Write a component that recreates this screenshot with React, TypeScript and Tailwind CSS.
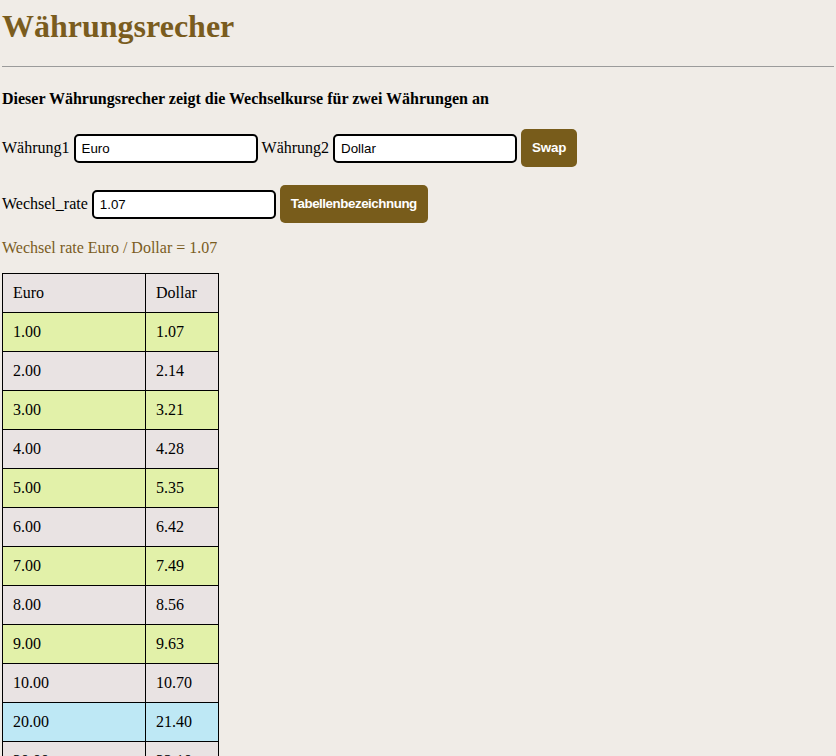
import { useState } from "react";

const serif = "font-['Liberation_Serif','Times_New_Roman',serif]";
const sans = "font-['Liberation_Sans',Arial,sans-serif]";

const amounts = [1, 2, 3, 4, 5, 6, 7, 8, 9, 10, 20, 30, 40, 50];

function rowColor(n: number) {
  if (n === 20) return "bg-[#bee8f5]";
  if (n < 10 && n % 2 === 1) return "bg-[#e2f1a9]";
  return "bg-[#e9e3e3]";
}

export default function App() {
  const [from, setFrom] = useState("Euro");
  const [to, setTo] = useState("Dollar");
  const [rate, setRate] = useState("1.07");
  const r = parseFloat(rate) || 0;

  return (
    <div className={`h-[756px] overflow-hidden bg-[#f0ece7] px-[2px] text-black ${serif}`}>
      <h1 className="mt-[8px] text-[32px] font-bold leading-[37px] text-[#7a5c1e]">
        Währungsrecher
      </h1>
      <hr className="mt-[21px] border-t border-[#9b9b9b]" />

      <p className="mt-[23px] text-[16px] font-bold leading-[18px]">
        Dieser Währungsrecher zeigt die Wechselkurse für zwei Währungen an
      </p>

      {/* currency inputs */}
      <div className="mt-[21px] flex items-center gap-[4px] text-[16px]">
        <span>Währung1</span>
        <input
          value={from}
          onChange={(e) => setFrom(e.target.value)}
          className={`h-[29px] w-[184px] rounded-[5px] border-2 border-black bg-white px-[6px] text-[13.33px] outline-none ${sans}`}
        />
        <span>Währung2</span>
        <input
          value={to}
          onChange={(e) => setTo(e.target.value)}
          className={`h-[29px] w-[184px] rounded-[5px] border-2 border-black bg-white px-[6px] text-[13.33px] outline-none ${sans}`}
        />
        <button
          onClick={() => {
            setFrom(to);
            setTo(from);
          }}
          className={`h-[38px] rounded-[5px] bg-[#785c1b] px-[11px] text-[13.33px] font-bold tracking-[-0.2px] text-white ${sans}`}
        >
          Swap
        </button>
      </div>

      <div className="mt-[18px] flex items-center gap-[4px] text-[16px]">
        <span>Wechsel_rate</span>
        <input
          value={rate}
          onChange={(e) => setRate(e.target.value)}
          className={`h-[29px] w-[184px] rounded-[5px] border-2 border-black bg-white px-[6px] text-[13.33px] outline-none ${sans}`}
        />
        <button
          className={`h-[38px] rounded-[5px] bg-[#785c1b] px-[11px] text-[13.33px] font-bold tracking-[-0.45px] text-white ${sans}`}
        >
          Tabellenbezeichnung
        </button>
      </div>

      <p className="mt-[16px] text-[16px] leading-[18px] text-[#7a5c1e]">
        Wechsel rate {from} / {to} = {rate}
      </p>

      <table className="mt-[16px] border-collapse text-[16px] leading-[18px]">
        <thead>
          <tr className="bg-[#e9e3e3]">
            <td className="h-[39px] w-[143px] border border-black px-[10px] font-normal">{from}</td>
            <td className="h-[39px] w-[73px] border border-black px-[10px] font-normal">{to}</td>
          </tr>
        </thead>
        <tbody>
          {amounts.map((n) => (
            <tr key={n} className={rowColor(n)}>
              <td className="h-[39px] border border-black px-[10px]">{n.toFixed(2)}</td>
              <td className="h-[39px] border border-black px-[10px]">{(n * r).toFixed(2)}</td>
            </tr>
          ))}
        </tbody>
      </table>
    </div>
  );
}
